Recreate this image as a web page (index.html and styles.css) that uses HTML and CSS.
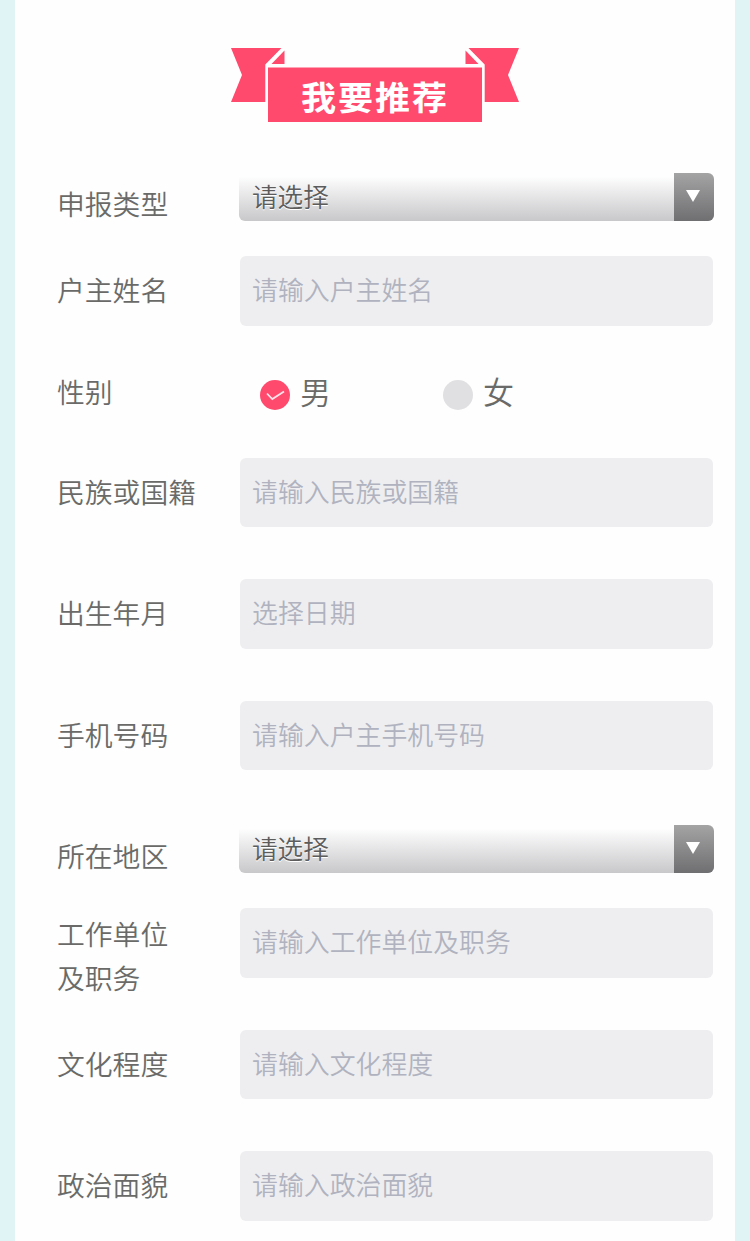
FILE: index.html
```html
<!DOCTYPE html>
<html lang="zh-CN">
<head>
<meta charset="utf-8">
<title>我要推荐</title>
<link rel="stylesheet" href="styles.css">
</head>
<body>
<main class="page">
  <h1 class="banner">
    <svg class="ribbon" width="290" height="76" viewBox="0 0 290 76" fill="#ff4a6e" aria-hidden="true">
      <path d="M1 1H51.500L35.300 17.500V55H1L12 28Z"/>
      <path d="M54.500 3.500V17H41.500Z"/>
      <path d="M289 1H238.500L254.700 17.500V55H289L278 28Z"/>
      <path d="M235.500 3.500V17H248.500Z"/>
      <path d="M38 20.500H252V75H38Z"/>
    </svg>
    <span class="banner-text">我要推荐</span>
  </h1>
  <form class="form">
    <div class="row row-select">
      <span class="label">申报类型</span>
      <div class="select"><span class="value">请选择</span><span class="arrow"><svg width="16" height="14" viewBox="0 0 16 14"><path d="M1 1H15L8 13Z" fill="#fff"/></svg></span></div>
    </div>
    <div class="row row-name">
      <span class="label">户主姓名</span>
      <div class="field">请输入户主姓名</div>
    </div>
    <div class="row row-gender">
      <span class="label">性别</span>
      <div class="options">
        <span class="option"><svg class="dot" width="30" height="30" viewBox="0 0 30 30"><circle cx="15" cy="15" r="15" fill="#ff4a6e"/><path d="M7 13.500L12.300 19L24 11.500" fill="none" stroke="#ffe3e9" stroke-width="1.800"/></svg>男</span>
        <span class="option"><svg class="dot" width="30" height="30" viewBox="0 0 30 30"><circle cx="15" cy="15" r="15" fill="#e0dfe2"/></svg>女</span>
      </div>
    </div>
    <div class="row">
      <span class="label">民族或国籍</span>
      <div class="field">请输入民族或国籍</div>
    </div>
    <div class="row">
      <span class="label">出生年月</span>
      <div class="field">选择日期</div>
    </div>
    <div class="row row-phone">
      <span class="label">手机号码</span>
      <div class="field">请输入户主手机号码</div>
    </div>
    <div class="row row-select">
      <span class="label">所在地区</span>
      <div class="select"><span class="value">请选择</span><span class="arrow"><svg width="16" height="14" viewBox="0 0 16 14"><path d="M1 1H15L8 13Z" fill="#fff"/></svg></span></div>
    </div>
    <div class="row row-job">
      <span class="label">工作单位<br>及职务</span>
      <div class="field">请输入工作单位及职务</div>
    </div>
    <div class="row">
      <span class="label">文化程度</span>
      <div class="field">请输入文化程度</div>
    </div>
    <div class="row">
      <span class="label">政治面貌</span>
      <div class="field">请输入政治面貌</div>
    </div>
  </form>
</main>
</body>
</html>
```
FILE: styles.css
```css
* { box-sizing: border-box; }
body {
  margin: 0;
  background: #e1f4f5;
  font-family: "Noto Sans CJK SC DemiLight", "Noto Sans CJK SC", sans-serif;
  font-weight: 350;
  color: #6a6b69;
}
.page {
  width: 720px;
  height: 1241px;
  margin: 0 auto;
  padding: 47px 21px 0 42px;
  overflow: hidden;
  background: #fdfefd;
}
.banner {
  position: relative;
  width: 290px;
  height: 76px;
  margin: 0 0 50px 173px;
}
.ribbon { display: block; }
.banner-text {
  position: absolute;
  left: 71px;
  top: 24px;
  font-family: "Noto Sans CJK SC", sans-serif;
  font-size: 35px;
  font-weight: 700;
  line-height: 50px;
  letter-spacing: 2px;
  color: #fff;
  white-space: nowrap;
  transform: scaleY(0.94);
}
.row {
  display: flex;
  align-items: flex-start;
  height: 121.5px;
}
.row-select { height: 83px; }
.row-name { height: 100px; }
.row-gender { height: 101.700px; }
.row-phone { height: 124.300px; }
.row-job { height: 121.700px; }
.label {
  flex: none;
  width: 183px;
  padding-top: 11px;
  font-size: 27.800px;
  line-height: 44px;
}
.row-select .label { width: 182px; padding-top: 8px; }
.row-gender .label { padding-top: 13px; }
.row-job .label { padding-top: 3px; }
.field {
  width: 473px;
  height: 69.500px;
  padding-left: 12px;
  border-radius: 6px;
  background: #eeeef0;
  color: #b0b3bf;
  font-size: 25.900px;
  line-height: 65.500px;
}
.row-job .field { height: 70px; }
.select {
  display: flex;
  width: 475px;
  height: 48px;
  border-radius: 6px;
  overflow: hidden;
  background: linear-gradient(#fdfefd 8%, #f4f4f5 24%, #c8c8ca);
}
.value {
  flex: 1;
  padding-left: 13px;
  color: #5c5c5c;
  font-size: 25.600px;
  line-height: 46px;
  text-shadow: 0 1px 0 #fff;
}
.arrow {
  display: flex;
  justify-content: center;
  width: 40px;
  padding: 16px 2px 0 0;
  background: linear-gradient(#a4a4a5, #6f6e70);
}
.options {
  display: flex;
  padding: 13px 0 0 20px;
}
.option {
  display: flex;
  width: 183px;
  gap: 10px;
  font-size: 31px;
  line-height: 44px;
}
.dot { margin-top: 11px; }
```
